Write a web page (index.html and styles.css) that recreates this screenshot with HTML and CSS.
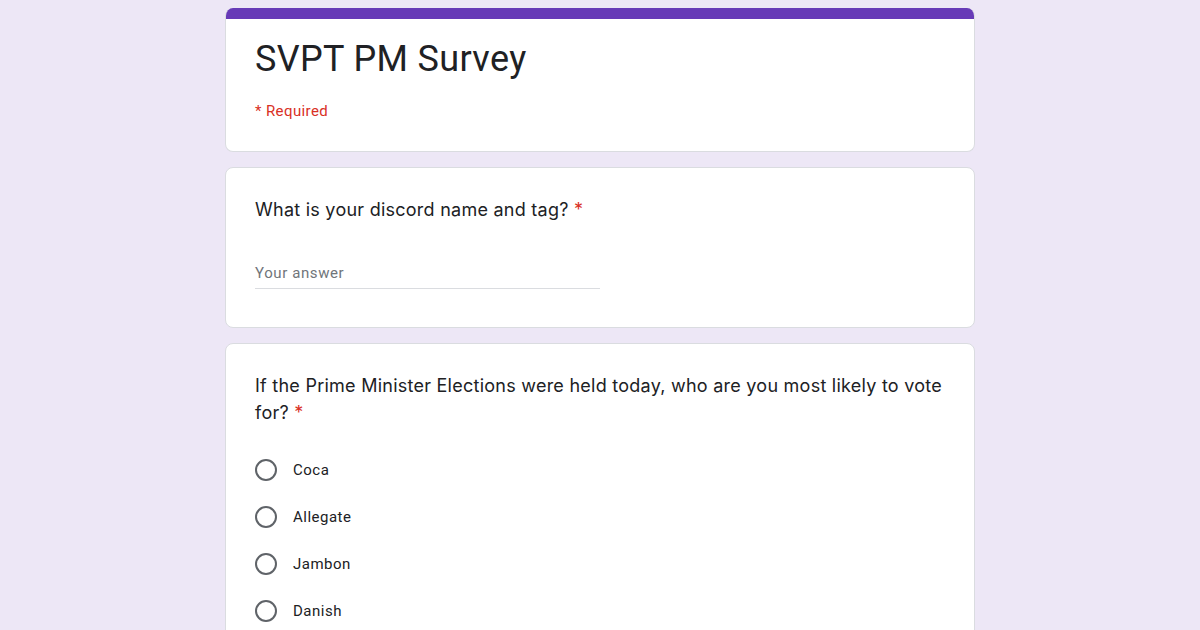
FILE: index.html
```html
<!DOCTYPE html>
<html>
<head>
<meta charset="utf-8">
<link rel="stylesheet" href="styles.css">
</head>
<body>
<main class="form">
  <section class="card header-card">
    <div class="accent"></div>
    <div class="header-body">
      <h1 class="title">SVPT PM Survey</h1>
      <div class="required-note">* Required</div>
    </div>
  </section>
  <section class="card question q-text-card">
    <div class="q-title">What is your discord name and tag? <span class="star">*</span></div>
    <div class="answer">Your answer</div>
  </section>
  <section class="card question">
    <div class="q-title">If the Prime Minister Elections were held today, who are you most likely to vote for? <span class="star">*</span></div>
    <div class="options">
      <div class="option"><span class="radio"></span><span class="opt-label">Coca</span></div>
      <div class="option"><span class="radio"></span><span class="opt-label">Allegate</span></div>
      <div class="option"><span class="radio"></span><span class="opt-label">Jambon</span></div>
      <div class="option"><span class="radio"></span><span class="opt-label">Danish</span></div>
    </div>
  </section>
</main>
</body>
</html>
```

FILE: styles.css
```css
html, body {
  margin: 0;
  padding: 0;
  background: #ede7f6;
  font-family: Roboto, "Open Sans", Arial, sans-serif;
  color: #202124;
  height: 630px;
  overflow: hidden;
}
.form {
  width: 750px;
  margin: 8px auto 0;
  display: flex;
  flex-direction: column;
  gap: 15px;
}
.card {
  background: #fff;
  border: 1px solid #dadce0;
  border-radius: 8px;
  box-sizing: border-box;
}
.header-card {
  overflow: hidden;
  border-top: none;
}
.accent {
  height: 11px;
  background: #673ab7;
}
.header-body {
  padding: 16px 29px 30px;
}
.title {
  margin: 0;
  font-weight: 400;
  font-size: 36px;
  line-height: 48px;
  letter-spacing: 0.35px;
  color: #202124;
}
.required-note {
  margin-top: 18px;
  font-size: 15px;
  line-height: 20px;
  color: #d93025;
  letter-spacing: 0.4px;
}
.question {
  padding: 28px 29px 24px;
}
.q-text-card {
  padding-bottom: 38px;
}
.q-title {
  font-family: Inter, Roboto, sans-serif;
  font-size: 18px;
  line-height: 27px;
  color: #202124;
  letter-spacing: 0.25px;
}
.star {
  color: #d93025;
}
.answer {
  margin-top: 40px;
  width: 345px;
  font-size: 15px;
  line-height: 20px;
  color: #70757a;
  padding-bottom: 5px;
  border-bottom: 1px solid #dadce0;
  letter-spacing: 0.6px;
}
.options {
  margin-top: 32px;
  display: flex;
  flex-direction: column;
  gap: 23px;
}
.option {
  display: flex;
  align-items: center;
  gap: 16px;
  height: 24px;
}
.radio {
  width: 18px;
  height: 18px;
  border: 2px solid #5f6368;
  border-radius: 50%;
  flex: none;
}
.opt-label {
  font-size: 15px;
  color: #202124;
  letter-spacing: 0.5px;
}
```
